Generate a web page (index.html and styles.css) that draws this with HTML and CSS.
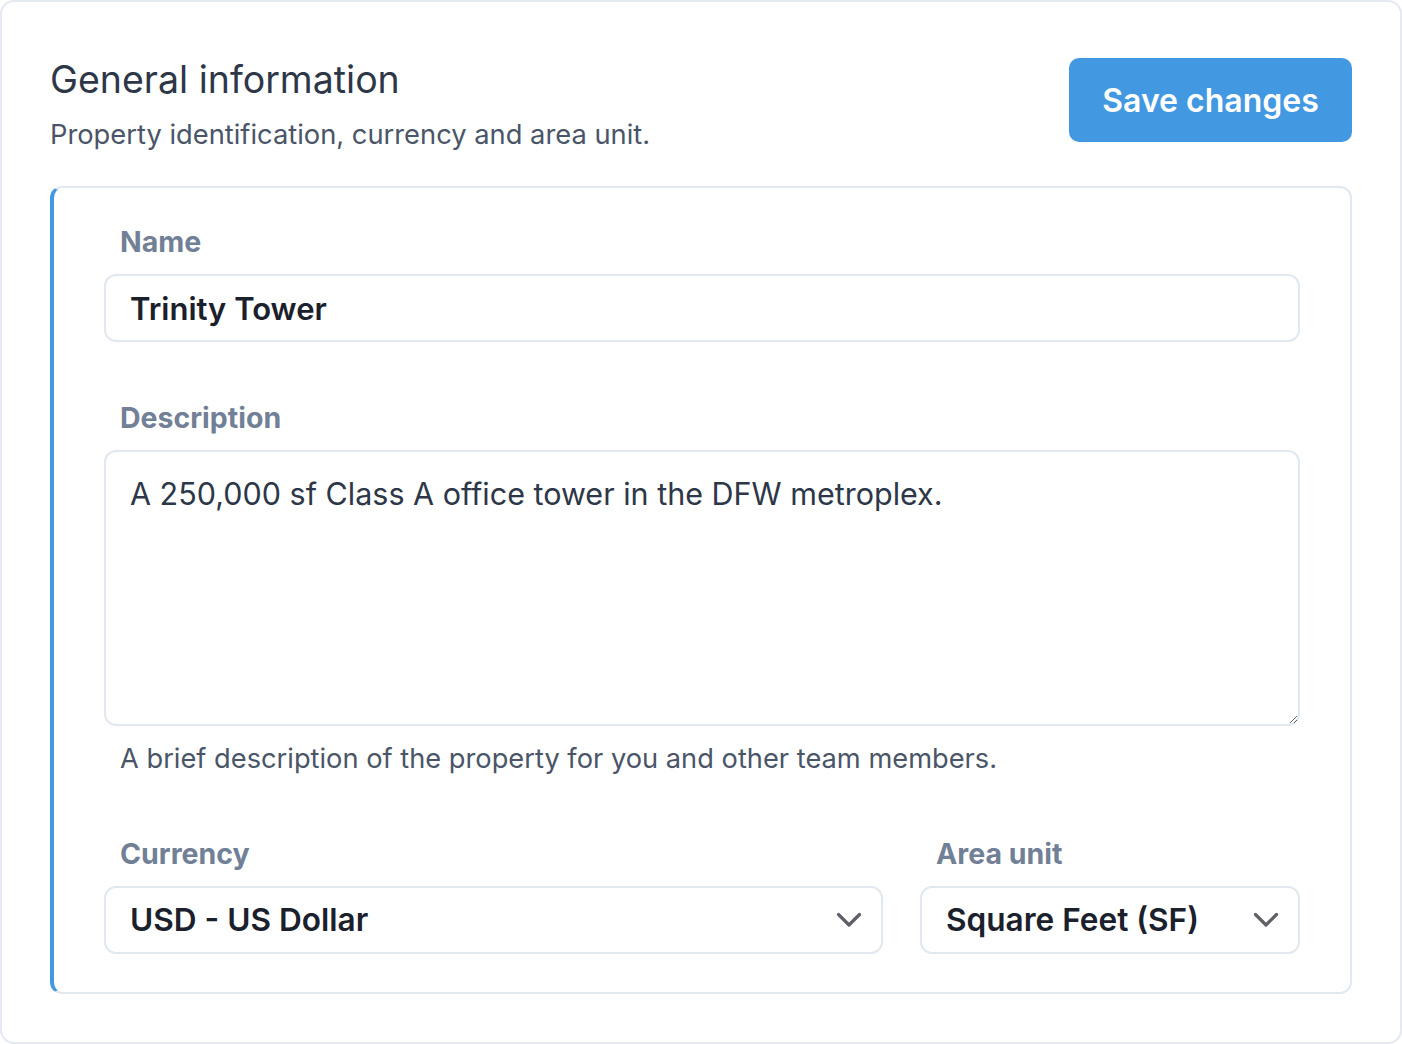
FILE: index.html
```html
<!DOCTYPE html>
<html lang="en">
<head>
<meta charset="utf-8">
<title>General information</title>
<link rel="stylesheet" href="styles.css">
</head>
<body>
<div class="panel">
  <div class="header">
    <div class="header-text">
      <h1 class="title">General information</h1>
      <p class="subtitle">Property identification, currency and area unit.</p>
    </div>
    <button class="btn-save" type="button">Save changes</button>
  </div>
  <div class="card">
    <div class="field">
      <label class="label" for="name">Name</label>
      <input class="input" id="name" type="text" value="Trinity Tower">
    </div>
    <div class="field field-desc">
      <label class="label" for="desc">Description</label>
      <textarea class="textarea" id="desc">A 250,000 sf Class A office tower in the DFW metroplex.</textarea>
      <p class="help">A brief description of the property for you and other team members.</p>
    </div>
    <div class="row">
      <div class="field">
        <label class="label" for="currency">Currency</label>
        <div class="select-wrap">
          <select class="select" id="currency"><option>USD - US Dollar</option></select>
          <svg class="chevron" width="26" height="16" viewBox="0 0 26 16"><path d="M2.5 2.5 L13 13 L23.5 2.5" fill="none" stroke="currentColor" stroke-width="3.2" stroke-linecap="round" stroke-linejoin="round"/></svg>
        </div>
      </div>
      <div class="field">
        <label class="label" for="unit">Area unit</label>
        <div class="select-wrap">
          <select class="select" id="unit"><option>Square Feet (SF)</option></select>
          <svg class="chevron" width="26" height="16" viewBox="0 0 26 16"><path d="M2.5 2.5 L13 13 L23.5 2.5" fill="none" stroke="currentColor" stroke-width="3.2" stroke-linecap="round" stroke-linejoin="round"/></svg>
        </div>
      </div>
    </div>
  </div>
</div>
</body>
</html>
```
FILE: styles.css
```css
* { box-sizing: border-box; }
html, body { margin: 0; padding: 0; background: #ffffff; }
body { font-family: Inter, "Noto Sans", sans-serif; }

.panel {
  width: 1402px;
  height: 1044px;
  border: 2px solid #e5e9f2;
  border-radius: 14px;
  padding: 54px 48px 48px 48px;
  display: flex;
  flex-direction: column;
}

.header {
  display: flex;
  justify-content: space-between;
  align-items: flex-start;
  margin-bottom: 31px;
}

.title {
  margin: 0;
  font-size: 37.5px;
  line-height: 48px;
  font-weight: 400;
  color: #2d3748;
}

.subtitle {
  margin: 11px 0 0 0;
  font-size: 27.3px;
  line-height: 40px;
  color: #4a5568;
}

.btn-save {
  margin-top: 2px;
  width: 283px;
  height: 84px;
  border: none;
  border-radius: 10px;
  background: #4299e1;
  color: #ffffff;
  font-family: inherit;
  font-size: 32px;
  font-weight: 600;
  padding: 0;
}

.card {
  flex: 1;
  border: 2px solid #e2e8f0;
  border-left: 4px solid #4299e1;
  border-radius: 12px;
  padding: 34px 50px 38px 50px;
  display: flex;
  flex-direction: column;
}

.field { display: flex; flex-direction: column; }
.field-desc { margin-top: 56px; }

.label {
  font-size: 28.5px;
  line-height: 40px;
  font-weight: 700;
  color: #718096;
  padding-left: 16px;
  margin-bottom: 12px;
}

.input {
  height: 68px;
  border: 2px solid #e2e8f0;
  border-radius: 12px;
  padding: 12px 24px;
  font-family: inherit;
  font-size: 31px;
  line-height: 40px;
  font-weight: 600;
  color: #1a202c;
  outline: none;
}

.textarea {
  height: 276px;
  border: 2px solid #e2e8f0;
  border-radius: 12px;
  padding: 22px 24px;
  font-family: inherit;
  font-size: 30.5px;
  line-height: 40px;
  color: #2d3748;
  resize: vertical;
  outline: none;
}

.help {
  margin: 13px 0 0 0;
  padding-left: 16px;
  font-size: 27.25px;
  line-height: 40px;
  color: #4a5568;
}

.row {
  margin-top: 55px;
  display: grid;
  grid-template-columns: 1fr 380px;
  gap: 37px;
}

.select-wrap {
  height: 68px;
  border: 2px solid #e2e8f0;
  border-radius: 12px;
  display: flex;
  align-items: center;
  padding-right: 19px;
}

.select {
  flex: 1;
  min-width: 0;
  -webkit-appearance: none;
  appearance: none;
  border: none;
  background: transparent;
  font-family: inherit;
  font-size: 31.6px;
  line-height: 40px;
  font-weight: 600;
  color: #1a202c;
  padding: 10px 24px;
  outline: none;
}

.chevron { color: #606068; flex: none; }
```
